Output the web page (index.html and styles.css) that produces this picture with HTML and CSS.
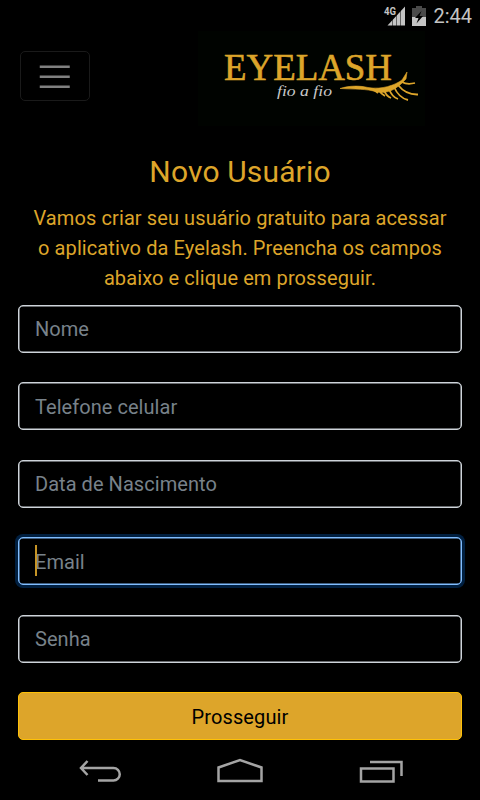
FILE: index.html
```html
<!DOCTYPE html>
<html lang="pt-BR">
<head>
    <meta charset="UTF-8">
    <meta name="viewport" content="width=device-width, initial-scale=1.0">
    <title>Eyelash - Novo Usuário</title>
    <link rel="stylesheet" href="styles.css">
</head>
<body>
    <div class="status-bar">
        <svg class="signal" width="24" height="24" viewBox="0 0 24 24">
            <text x="1" y="11" class="signal-label" textLength="12" lengthAdjust="spacingAndGlyphs">4G</text>
            <path class="signal-bars" d="M4.500 21.500L22 2.500V21.500Z"/>
            <path class="signal-gaps" d="M9.500 13V22M13.500 8V22M17.500 4V22"/>
        </svg>
        <svg class="battery" width="14" height="20" viewBox="0 0 14 20">
            <path fill="#4a4a4a" d="M4 0h6v2h4v10H0V2h4z"/>
            <path fill="#c4c4c4" d="M0 11h14v9H0z"/>
            <path d="M9.500 5L3 12h3.500L4.500 17.500L11 10H7.500z"/>
        </svg>
        <span class="clock">2:44</span>
    </div>

    <nav class="navbar">
        <button type="button" class="navbar-toggler" aria-label="Menu">
            <svg width="37.5" height="37.5" viewBox="0 0 30 30">
                <path stroke="#808080" stroke-width="2" stroke-linecap="butt" d="M3 7h24M3 15h24M3 23h24"/>
            </svg>
        </button>
        <svg class="logo" width="227" height="95" viewBox="0 0 227 95">
            <text x="26" y="49" class="logo-name" textLength="168" lengthAdjust="spacingAndGlyphs">EYELASH</text>
            <text x="79" y="65" class="logo-tagline" textLength="55" lengthAdjust="spacingAndGlyphs">fio a fio</text>
            <g class="logo-lash">
                <path class="filled" d="M142 57.500C152 54.500 161 54.500 170 56.500C184 59 197 54 204 49L209 41L208 48C199 58 190 63 179 61C168 57.500 158 58.500 142 57.500Z"/>
                <path d="M204 51Q209 54 217 52M200 54Q208 64 220 63.500M196 56Q201 67 210 69M191 58Q194 66 200 68M186 59Q188 65 193 67M181 59Q183 63 187 65M175 58L180 62"/>
            </g>
        </svg>
    </nav>

    <main class="container">
        <h1>Novo Usuário</h1>
        <p class="intro">Vamos criar seu usuário gratuito para acessar o aplicativo da Eyelash. Preencha os campos abaixo e clique em prosseguir.</p>

        <form id="cadastro-form">
            <input type="text" class="form-control" name="nome" placeholder="Nome">
            <input type="tel" class="form-control" name="telefone" placeholder="Telefone celular">
            <input type="text" class="form-control" name="nascimento" placeholder="Data de Nascimento">
            <div class="field-active">
                <input type="email" class="form-control" name="email" placeholder="Email">
                <span class="caret"></span>
            </div>
            <input type="password" class="form-control" name="senha" placeholder="Senha">
            <button type="submit" class="submit-btn">Prosseguir</button>
        </form>
    </main>

    <!-- Android navigation keys -->
    <div class="system-nav">
        <svg width="44" height="28" viewBox="0 0 44 28">
            <path d="M4 11H36.500A6 6 0 0 1 36.500 23.500H21M10.500 4L4 11L10.500 18"/>
        </svg>
        <svg width="48" height="28" viewBox="0 0 48 28">
            <path d="M2.500 10.500L24 3L45.500 10.500V24H2.500Z"/>
        </svg>
        <svg width="44" height="28" viewBox="0 0 44 28">
            <path d="M2 11.500H34.500V24.500H2ZM11 5H42.500V19"/>
        </svg>
    </div>
</body>
</html>
```

FILE: styles.css
```css
* {
    box-sizing: border-box;
}
body {
    margin: 0;
    height: 800px;
    display: flex;
    flex-direction: column;
    overflow: hidden;
    background: #000;
    color: #dda52a;
    font-family: Roboto, sans-serif;
    font-size: 20px;
}
svg {
    display: block;
    fill: none;
}
.status-bar {
    display: flex;
    justify-content: flex-end;
    align-items: center;
    height: 31px;
    padding-right: 8px;
    color: #c4c4c4;
}
.signal {
    margin-right: 5px;
}
.signal-label {
    fill: #c4c4c4;
    font-size: 10.5px;
    font-weight: bold;
}
.signal-bars {
    fill: #c4c4c4;
}
.signal-gaps {
    stroke: #000;
    stroke-width: 0.5;
}
.battery {
    margin-right: 7px;
}
.battery path:last-child {
    fill: #000;
}
.clock {
    font-size: 20px;
}
.navbar {
    display: flex;
    justify-content: space-between;
    align-items: flex-start;
    height: 98px;
    padding: 0 55px 0 20px;
}
.navbar-toggler {
    display: flex;
    align-items: center;
    justify-content: center;
    width: 70px;
    height: 50px;
    margin-top: 20px;
    padding: 1px 0 0;
    background: transparent;
    border: 1px solid #1a1a1a;
    border-radius: 5px;
}
.logo {
    background: #000300;
}
.logo-name {
    fill: #dda52a;
    font-family: "Liberation Serif", serif;
    font-size: 38px;
    stroke: #dda52a;
    stroke-width: 0.6;
}
.logo-tagline {
    fill: #c8c8c8;
    font-family: "Liberation Serif", serif;
    font-size: 15px;
    font-style: italic;
}
.logo-lash {
    stroke: #dda52a;
    stroke-width: 1.8;
}
.logo-lash .filled {
    fill: #dda52a;
    stroke-width: 0.6;
}
.container {
    padding: 25px 18.4px 0;
    text-align: center;
}
h1 {
    margin: 0 0 13px;
    font-size: 30px;
    font-weight: 400;
    line-height: 36px;
    letter-spacing: 0.15px;
}
.intro {
    margin: 0 0 11.9px;
    padding: 0 10px;
    line-height: 30px;
    letter-spacing: 0.1px;
}
form {
    display: flex;
    flex-direction: column;
    gap: 30px;
}
.form-control {
    display: block;
    width: 100%;
    height: 47.7px;
    margin-bottom: -0.2px;
    padding: 8px 15.6px 7px;
    background: #000;
    border: 1px solid #ced4da;
    border-radius: 5px;
    box-shadow: inset 0 0 0 0.5px #ced4da;
    color: #dda52a;
    font-family: inherit;
    font-size: 20px;
    letter-spacing: 0.05px;
    outline: none;
}
.form-control::placeholder {
    color: #78828a;
    opacity: 1;
}
.field-active {
    position: relative;
}
.field-active .form-control {
    border-color: #80bdff;
    box-shadow: 0 0 0 3px #001f40, inset 0 0 0 0.5px #80bdff;
}
.caret {
    position: absolute;
    top: 8px;
    left: 16.6px;
    width: 2px;
    height: 31px;
    background: #c69426;
}
.submit-btn {
    height: 47.5px;
    padding: 2px 0 0;
    background: #dda52a;
    border: 1px solid #ffc107;
    border-radius: 5px;
    color: #000;
    font-family: inherit;
    font-size: 20px;
    letter-spacing: 0.1px;
}
.system-nav {
    display: flex;
    justify-content: space-between;
    height: 43px;
    margin-top: auto;
    padding: 0 77px;
}
.system-nav path {
    stroke: #a4a4a4;
    stroke-width: 2.5;
}
```
